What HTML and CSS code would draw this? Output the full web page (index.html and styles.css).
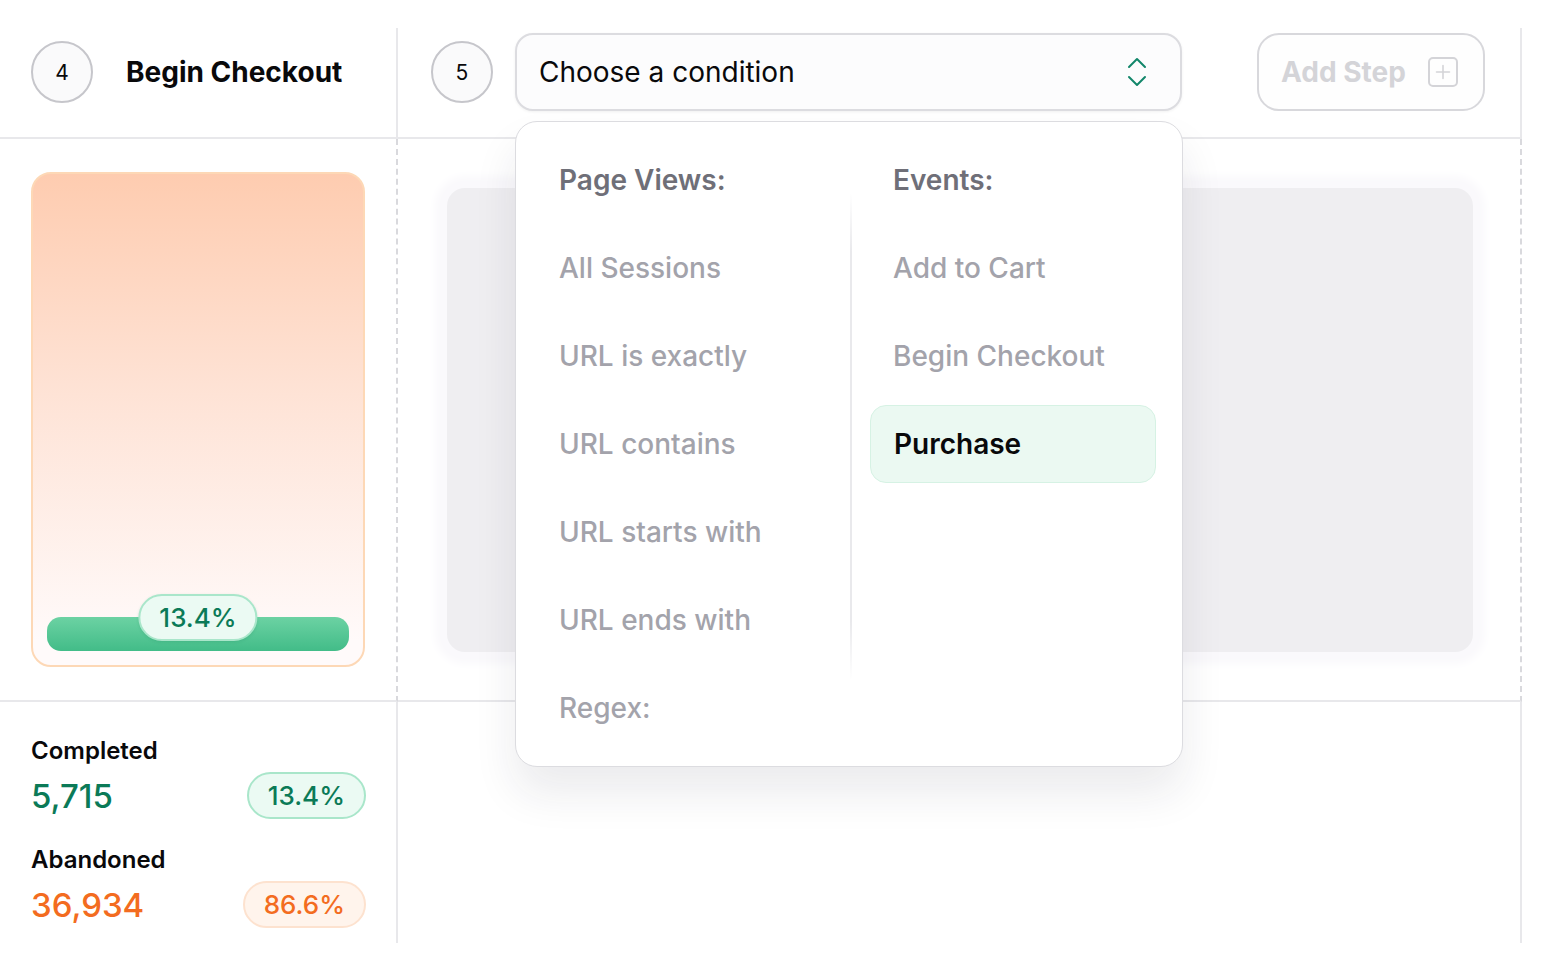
FILE: index.html
```html
<!DOCTYPE html>
<html lang="en">
<head>
  <meta charset="UTF-8">
  <title>Funnel steps</title>
  <link rel="stylesheet" href="styles.css">
</head>
<body>
  <div class="board">
    <div class="cell head-cell col-a">
      <span class="step-num">4</span>
      <span class="step-title">Begin Checkout</span>
    </div>

    <div class="cell head-cell col-b">
      <span class="step-num">5</span>
      <div class="condition">
        <div class="select">
          <span>Choose a condition</span>
          <svg class="chevrons" width="20" height="30" viewBox="0 0 20 30" fill="none" stroke="#12866a" stroke-width="2" stroke-linecap="round" stroke-linejoin="round">
            <path d="M2 10 L10 2 L18 10"/>
            <path d="M2 20 L10 28 L18 20"/>
          </svg>
        </div>

        <div class="menu">
          <div class="menu-cols">
            <ul class="menu-col">
              <li class="menu-head">Page Views:</li>
              <li class="menu-item">All Sessions</li>
              <li class="menu-item">URL is exactly</li>
              <li class="menu-item">URL contains</li>
              <li class="menu-item">URL starts with</li>
              <li class="menu-item">URL ends with</li>
            </ul>
            <ul class="menu-col events">
              <li class="menu-head">Events:</li>
              <li class="menu-item">Add to Cart</li>
              <li class="menu-item">Begin Checkout</li>
              <li class="menu-item active">Purchase</li>
            </ul>
          </div>
          <div class="menu-row menu-regex">Regex:</div>
        </div>
      </div>

      <button class="add-step">
        Add Step
        <span class="plus-box">
          <svg width="16" height="16" viewBox="0 0 16 16" fill="none" stroke="#d4d4d8" stroke-width="1.6" stroke-linecap="round">
            <path d="M8 1.5 V14.5 M1.5 8 H14.5"/>
          </svg>
        </span>
      </button>
    </div>

    <div class="cell chart-cell col-a">
      <div class="funnel">
        <div class="funnel-bar"></div>
        <span class="pill green funnel-pill">13.4%</span>
      </div>
    </div>

    <div class="cell chart-cell col-b">
      <div class="placeholder"></div>
    </div>

    <div class="cell stats-cell col-a">
      <div class="stat">
        <div class="stat-label">Completed</div>
        <div class="stat-row">
          <span class="stat-value green-text">5,715</span>
          <span class="pill green">13.4%</span>
        </div>
      </div>
      <div class="stat">
        <div class="stat-label">Abandoned</div>
        <div class="stat-row">
          <span class="stat-value orange-text">36,934</span>
          <span class="pill orange">86.6%</span>
        </div>
      </div>
    </div>

    <div class="cell stats-cell col-b"></div>
  </div>
</body>
</html>
```

FILE: styles.css
```css
body {
  margin: 0;
  font-family: Inter, "Liberation Sans", sans-serif;
  color: #09090b;
  background: #fff;
}
ul {
  margin: 0;
  padding: 0;
  list-style: none;
}

.board {
  display: grid;
  grid-template-columns: 398px 1124px;
  grid-template-rows: 111px 563px 241px;
  margin-top: 28px;
}
.cell {
  box-sizing: border-box;
  border-right: 2px solid #e8e8eb;
}
.head-cell,
.chart-cell {
  border-bottom: 2px solid #e8e8eb;
}
.chart-cell {
  border-right: 2px dashed #d9d9dd;
}

/* header row */
.head-cell {
  display: flex;
  align-items: center;
  padding-bottom: 21px;
}
.head-cell.col-a {
  padding-left: 31px;
  gap: 33px;
}
.head-cell.col-b {
  padding-left: 33px;
  position: relative;
  z-index: 2;
}
.step-num {
  box-sizing: border-box;
  width: 62px;
  height: 62px;
  flex: none;
  border: 2px solid #c6c6cb;
  border-radius: 50%;
  background: #fafafb;
  display: flex;
  align-items: center;
  justify-content: center;
  font-size: 21px;
}
.step-title {
  font-size: 28px;
  font-weight: 700;
}

.condition {
  position: relative;
  margin-left: 22px;
}
.select {
  box-sizing: border-box;
  width: 667px;
  height: 78px;
  border: 2px solid #dcdce0;
  border-radius: 18px;
  background: #fcfcfd;
  box-shadow: 0 1px 3px rgba(0, 0, 0, 0.06);
  padding: 0 33px 0 22px;
  display: flex;
  align-items: center;
  justify-content: space-between;
  font-size: 28px;
}

.menu {
  position: absolute;
  top: 88px;
  left: 0;
  box-sizing: border-box;
  width: 668px;
  padding: 19px 26px 19px 20px;
  border: 1.5px solid #dcdce0;
  border-radius: 22px;
  background: #fff;
  box-shadow: 0 26px 44px rgba(30, 30, 50, 0.09);
}
.menu-cols {
  display: grid;
  grid-template-columns: 314px 1fr;
}
.menu-col {
  display: flex;
  flex-direction: column;
  gap: 10px;
}
.menu-col.events {
  position: relative;
  padding-left: 20px;
}
.menu-col.events::before {
  content: "";
  position: absolute;
  left: 0;
  top: 52px;
  bottom: -21px;
  width: 1.5px;
  background: linear-gradient(to bottom, rgba(232, 232, 235, 0), #e9e9ec 12%, #e9e9ec 88%, rgba(232, 232, 235, 0));
}
.menu-col li,
.menu-row {
  box-sizing: border-box;
  height: 78px;
  padding-left: 23px;
  display: flex;
  align-items: center;
  font-size: 28px;
}
.menu-head {
  font-weight: 600;
  color: #6f6f78;
}
.menu-item {
  font-weight: 500;
  color: #a3a3ab;
}
.menu-item.active {
  color: #09090b;
  font-weight: 600;
  background: #ebf9f2;
  border: 1.5px solid #d6f2e4;
  border-radius: 16px;
}
.menu-regex {
  margin-top: 10px;
  font-weight: 500;
  color: #a3a3ab;
}

.add-step {
  box-sizing: border-box;
  margin-left: 75px;
  width: 228px;
  height: 78px;
  border: 2px solid #d8d8dc;
  border-radius: 22px;
  background: #fefefe;
  padding: 0 0 0 22px;
  display: flex;
  align-items: center;
  gap: 22px;
  font-family: inherit;
  font-size: 28px;
  font-weight: 700;
  color: #d4d4d8;
}
.plus-box {
  box-sizing: border-box;
  width: 30px;
  height: 30px;
  border: 2px solid #d4d4d8;
  border-radius: 5px;
  display: flex;
  align-items: center;
  justify-content: center;
}

/* chart row */
.chart-cell.col-a {
  padding: 33px 31px 33px 31px;
}
.funnel {
  box-sizing: border-box;
  height: 100%;
  position: relative;
  border: 2px solid #fdd8b6;
  border-radius: 20px;
  background: linear-gradient(to bottom, #feccb0, #fee3d6 45%, #fffafa 95%);
  padding: 14px;
  display: flex;
  flex-direction: column;
  justify-content: flex-end;
}
.funnel-bar {
  height: 34px;
  border-radius: 14px;
  background: linear-gradient(to bottom, #6cd2a3, #42bc88);
}
.funnel-pill {
  position: absolute;
  left: 50%;
  bottom: 24px;
  transform: translateX(-50%);
  font-size: 27px;
  font-weight: 600;
  box-shadow: 0 1px 3px rgba(20, 120, 80, 0.15);
}

.chart-cell.col-b {
  padding: 49px 47px 48px 49px;
}
.placeholder {
  height: 100%;
  border-radius: 18px;
  background: #efeef1;
  box-shadow: 0 0 8px 12px #faf9fc;
}

/* stats row */
.stats-cell.col-a {
  padding: 35px 30px 0 31px;
}
.stat + .stat {
  margin-top: 27px;
}
.stat-label {
  font-size: 24px;
  font-weight: 600;
  line-height: 28px;
}
.stat-row {
  margin-top: 7px;
  display: flex;
  align-items: center;
  justify-content: space-between;
}
.stat-value {
  font-size: 33px;
  font-weight: 500;
}
.green-text {
  color: #0b7a57;
}
.orange-text {
  color: #f36c20;
}

.pill {
  box-sizing: border-box;
  height: 47px;
  padding: 0 19px;
  border: 2px solid;
  border-radius: 24px;
  display: inline-flex;
  align-items: center;
  font-size: 26px;
  font-weight: 500;
}
.pill.green {
  color: #0b7a57;
  background: #ebfaf3;
  border-color: #a9e6ca;
}
.pill.orange {
  color: #f36c20;
  background: #fff4ec;
  border-color: #fde2cf;
}
```
